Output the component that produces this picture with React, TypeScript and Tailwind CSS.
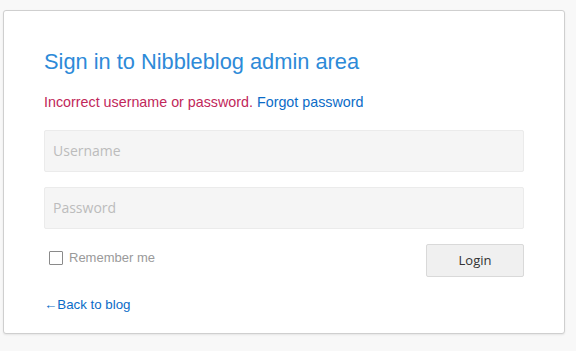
import React from "react";

export default function App() {
  return (
    <div className="w-[576px] h-[351px] bg-[#f8f8f8] pt-[10px] pl-[3px]" style={{ fontFamily: '"Liberation Sans", Arial, sans-serif' }}>
      <div className="w-[562px] h-[324px] bg-white border border-[#cfcfcf] rounded-[3px] shadow-[0_1px_2px_rgba(0,0,0,0.08)] px-10 pt-[36px]">
        <h1 className="text-[21.8px] leading-[30px] text-[#2d8ad8]">Sign in to Nibbleblog admin area</h1>
        <p className="mt-[15px] text-[14.3px] leading-[20px]">
          <span className="text-[#c1275a]">Incorrect username or password.</span>{" "}
          <a className="text-[#0b6cc7]">Forgot password</a>
        </p>
        <input
          className="mt-[18px] block w-full h-[42px] bg-[#f5f5f5] border border-[#ebebeb] rounded-[2px] px-[8px] pb-[2px] text-[14px] text-[#555] placeholder:text-[#bcbcbc] outline-none"
          style={{ fontFamily: '"Open Sans", sans-serif' }}
          placeholder="Username"
        />
        <input
          className="mt-[15px] block w-full h-[42px] bg-[#f5f5f5] border border-[#ebebeb] rounded-[2px] px-[8px] pb-[2px] text-[14px] text-[#555] placeholder:text-[#bcbcbc] outline-none"
          style={{ fontFamily: '"Open Sans", sans-serif' }}
          placeholder="Password"
          type="password"
        />
        <div className="mt-[15px] flex justify-between items-start">
          <label className="flex items-center pl-[5px] pt-[4px] text-[13px] text-[#9a9a9a]">
            <span className="inline-block w-[14px] h-[14px] border border-[#8a8a8a] bg-white rounded-[1px] mr-[6px] mt-[1px]" />
            Remember me
          </label>
          <button
            className="w-[98px] h-[33px] bg-[#f0f0f0] border border-[#d9d9d9] rounded-[2px] text-[13px] text-[#333] pt-[1px]"
            style={{ fontFamily: '"Open Sans", sans-serif' }}
          >
            Login
          </button>
        </div>
        <a className="block mt-[18px] text-[13.3px] text-[#0b6cc7]">←Back to blog</a>
      </div>
    </div>
  );
}
